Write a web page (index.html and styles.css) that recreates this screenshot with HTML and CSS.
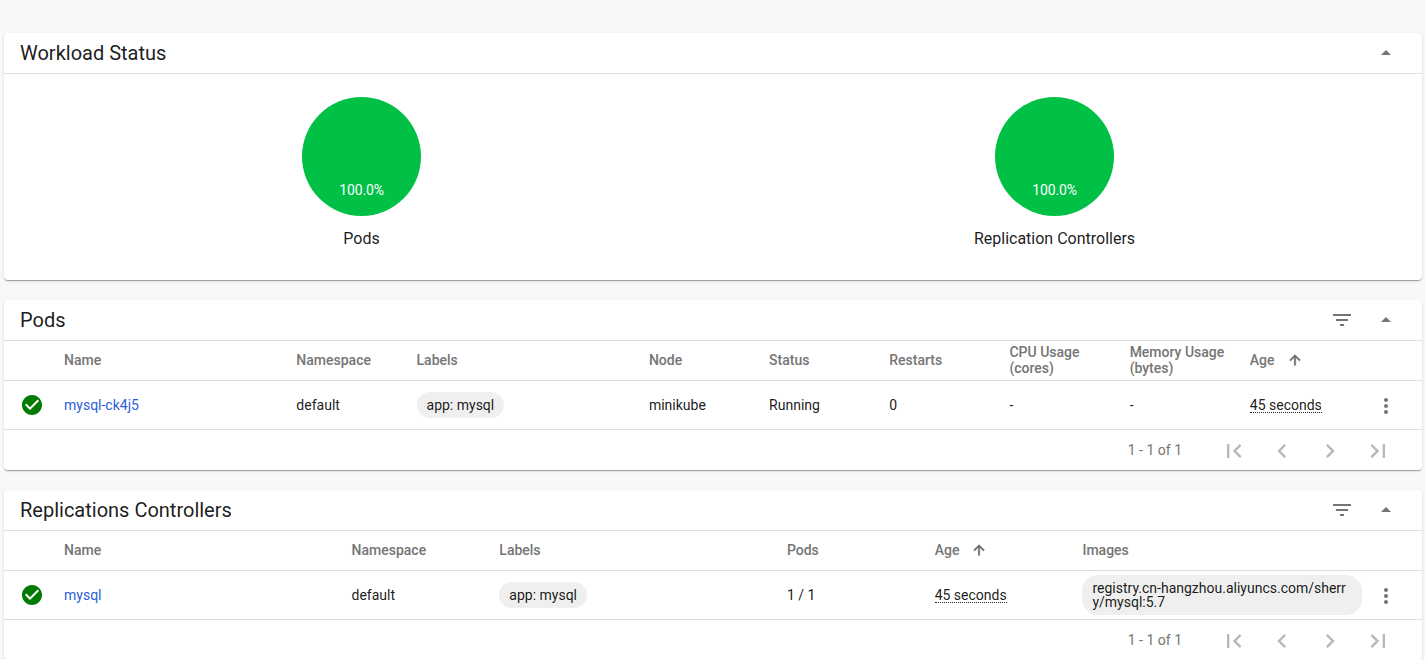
FILE: index.html
```
<!DOCTYPE html>
<html lang="en">
<head>
<meta charset="utf-8">
<title>Workloads</title>
<link rel="stylesheet" href="styles.css">
</head>
<body>
<svg class="sprite" aria-hidden="true">
  <symbol id="up" viewBox="0 0 24 24"><path d="M7 14l5-5 5 5z"/></symbol>
  <symbol id="filter" viewBox="0 0 24 24"><path d="M10 18h4v-2h-4v2zM3 6v2h18V6H3zm3 7h12v-2H6v2z"/></symbol>
  <symbol id="arrow" viewBox="0 0 24 24"><path d="M4 12l1.41 1.41L11 7.83V20h2V7.83l5.58 5.59L20 12l-8-8-8 8z"/></symbol>
  <symbol id="check" viewBox="0 0 24 24"><path d="M12 2C6.48 2 2 6.48 2 12s4.48 10 10 10 10-4.48 10-10S17.52 2 12 2zm-2 15l-5-5 1.41-1.41L10 14.17l7.59-7.59L19 8l-9 9z"/></symbol>
  <symbol id="more" viewBox="0 0 24 24"><path d="M12 8c1.1 0 2-.9 2-2s-.9-2-2-2-2 .9-2 2 .9 2 2 2zm0 2c-1.1 0-2 .9-2 2s.9 2 2 2 2-.9 2-2-.9-2-2-2zm0 6c-1.1 0-2 .9-2 2s.9 2 2 2 2-.9 2-2-.9-2-2-2z"/></symbol>
  <symbol id="first" viewBox="0 0 24 24"><path d="M18.41 16.59L13.82 12l4.59-4.59L17 6l-6 6 6 6zM6 6h2v12H6z"/></symbol>
  <symbol id="prev" viewBox="0 0 24 24"><path d="M15.41 7.41L14 6l-6 6 6 6 1.41-1.41L10.83 12z"/></symbol>
  <symbol id="next" viewBox="0 0 24 24"><path d="M10 6L8.59 7.41 13.17 12l-4.58 4.59L10 18l6-6z"/></symbol>
  <symbol id="last" viewBox="0 0 24 24"><path d="M5.59 7.41L10.18 12l-4.59 4.59L7 18l6-6-6-6zM16 6h2v12h-2z"/></symbol>
</svg>
<main class="page">
  <section class="card status-card">
    <header class="card-head"><h2>Workload Status</h2><svg class="icon"><use href="#up"/></svg></header>
    <div class="charts">
      <figure class="chart"><div class="pie"><span>100.0%</span></div><figcaption>Pods</figcaption></figure>
      <figure class="chart"><div class="pie"><span>100.0%</span></div><figcaption>Replication Controllers</figcaption></figure>
    </div>
  </section>

  <section class="card">
    <header class="card-head"><h2>Pods</h2><svg class="icon"><use href="#filter"/></svg><svg class="icon"><use href="#up"/></svg></header>
    <div class="row pods head">
      <span></span><span>Name</span><span>Namespace</span><span>Labels</span><span>Node</span><span>Status</span><span>Restarts</span><span>CPU Usage<br>(cores)</span><span>Memory Usage<br>(bytes)</span><span class="sorted">Age<svg class="sort"><use href="#arrow"/></svg></span><span></span>
    </div>
    <div class="row pods">
      <svg class="icon ok"><use href="#check"/></svg><a class="link">mysql-ck4j5</a><span>default</span><span class="chip">app: mysql</span><span>minikube</span><span>Running</span><span>0</span><span>-</span><span>-</span><span class="age">45 seconds</span><svg class="icon menu"><use href="#more"/></svg>
    </div>
    <footer class="pager"><span>1 - 1 of 1</span><svg class="icon"><use href="#first"/></svg><svg class="icon"><use href="#prev"/></svg><svg class="icon"><use href="#next"/></svg><svg class="icon"><use href="#last"/></svg></footer>
  </section>

  <section class="card">
    <header class="card-head"><h2>Replications Controllers</h2><svg class="icon"><use href="#filter"/></svg><svg class="icon"><use href="#up"/></svg></header>
    <div class="row controllers head">
      <span></span><span>Name</span><span>Namespace</span><span>Labels</span><span>Pods</span><span class="sorted">Age<svg class="sort"><use href="#arrow"/></svg></span><span>Images</span><span></span>
    </div>
    <div class="row controllers">
      <svg class="icon ok"><use href="#check"/></svg><a class="link">mysql</a><span>default</span><span class="chip">app: mysql</span><span>1 / 1</span><span class="age">45 seconds</span><span class="chip image">registry.cn-hangzhou.aliyuncs.com/sherry/mysql:5.7</span><svg class="icon menu"><use href="#more"/></svg>
    </div>
    <footer class="pager"><span>1 - 1 of 1</span><svg class="icon"><use href="#first"/></svg><svg class="icon"><use href="#prev"/></svg><svg class="icon"><use href="#next"/></svg><svg class="icon"><use href="#last"/></svg></footer>
  </section>
</main>
</body>
</html>
```
FILE: styles.css
```
* { box-sizing: border-box; }
html, body { height: 100%; }
body {
  margin: 0;
  overflow: hidden;
  background: #f8f8f8;
  color: rgba(0, 0, 0, .9);
  font: 14px/16px Roboto, sans-serif;
}
.sprite { display: none; }
.page {
  display: flex;
  flex-direction: column;
  gap: 20px;
  padding: 33px 3px 0 4px;
}
.card {
  background: #fff;
  border-radius: 4px;
  box-shadow: 0 2px 1px -1px rgba(0, 0, 0, .2), 0 1px 1px rgba(0, 0, 0, .14), 0 1px 3px rgba(0, 0, 0, .12);
}
.status-card { height: 247px; }
.card-head {
  display: flex;
  align-items: center;
  gap: 20px;
  height: 41px;
  padding: 0 24px 0 16px;
  border-bottom: 1px solid #dedede;
}
.card-head h2 {
  flex: 1;
  margin: 0;
  font-size: 20px;
  font-weight: 400;
  line-height: 24px;
}
.icon { width: 24px; height: 24px; fill: #757575; }

.charts { display: grid; grid-template-columns: 1fr 1fr; padding: 23px 21px 0 11px; }
.chart { display: flex; flex-direction: column; align-items: center; margin: 0; }
.pie {
  display: flex;
  align-items: flex-end;
  justify-content: center;
  width: 119px;
  height: 119px;
  padding-bottom: 18px;
  border-radius: 50%;
  background: #00c145;
  color: #fff;
  letter-spacing: -.15px;
}
.chart figcaption { margin-top: 13px; font-size: 16px; line-height: 20px; }

.row {
  display: grid;
  align-items: center;
  column-gap: 8px;
  height: 49px;
  padding: 0 20px 0 16px;
  border-bottom: 1px solid #dedede;
}
.pods { grid-template-columns: 36px 2fr 1fr 2fr repeat(6, 1fr) 32px; }
.controllers { grid-template-columns: 36px 2fr 1fr 2fr 1fr 1fr 2fr 32px; }
.row > * { min-width: 0; }
.head { height: 40px; padding-bottom: 1px; color: #757575; font-weight: 500; white-space: nowrap; }
.sorted { display: flex; align-items: center; gap: 12px; }
.sort { width: 16px; height: 16px; fill: #666; stroke: #666; stroke-width: .8; }
.row .ok { fill: #007a00; }
.link { color: #2b5fd9; }
.chip {
  justify-self: start;
  padding: 6px 10px;
  border-radius: 16px;
  background: #efefef;
  line-height: 14px;
}
.image { word-break: break-all; }
.age { justify-self: start; border-bottom: 1px dotted #222; line-height: 14px; }
.row .menu { justify-self: center; margin-top: 2px; }

.pager {
  display: flex;
  align-items: center;
  gap: 20px;
  height: 40px;
  padding-right: 30px;
  justify-content: flex-end;
  color: #757575;
}
.pager span { margin-right: 18px; }
.pager .icon { width: 28px; height: 28px; margin-top: 2px; fill: #b8b8b8; }
```
